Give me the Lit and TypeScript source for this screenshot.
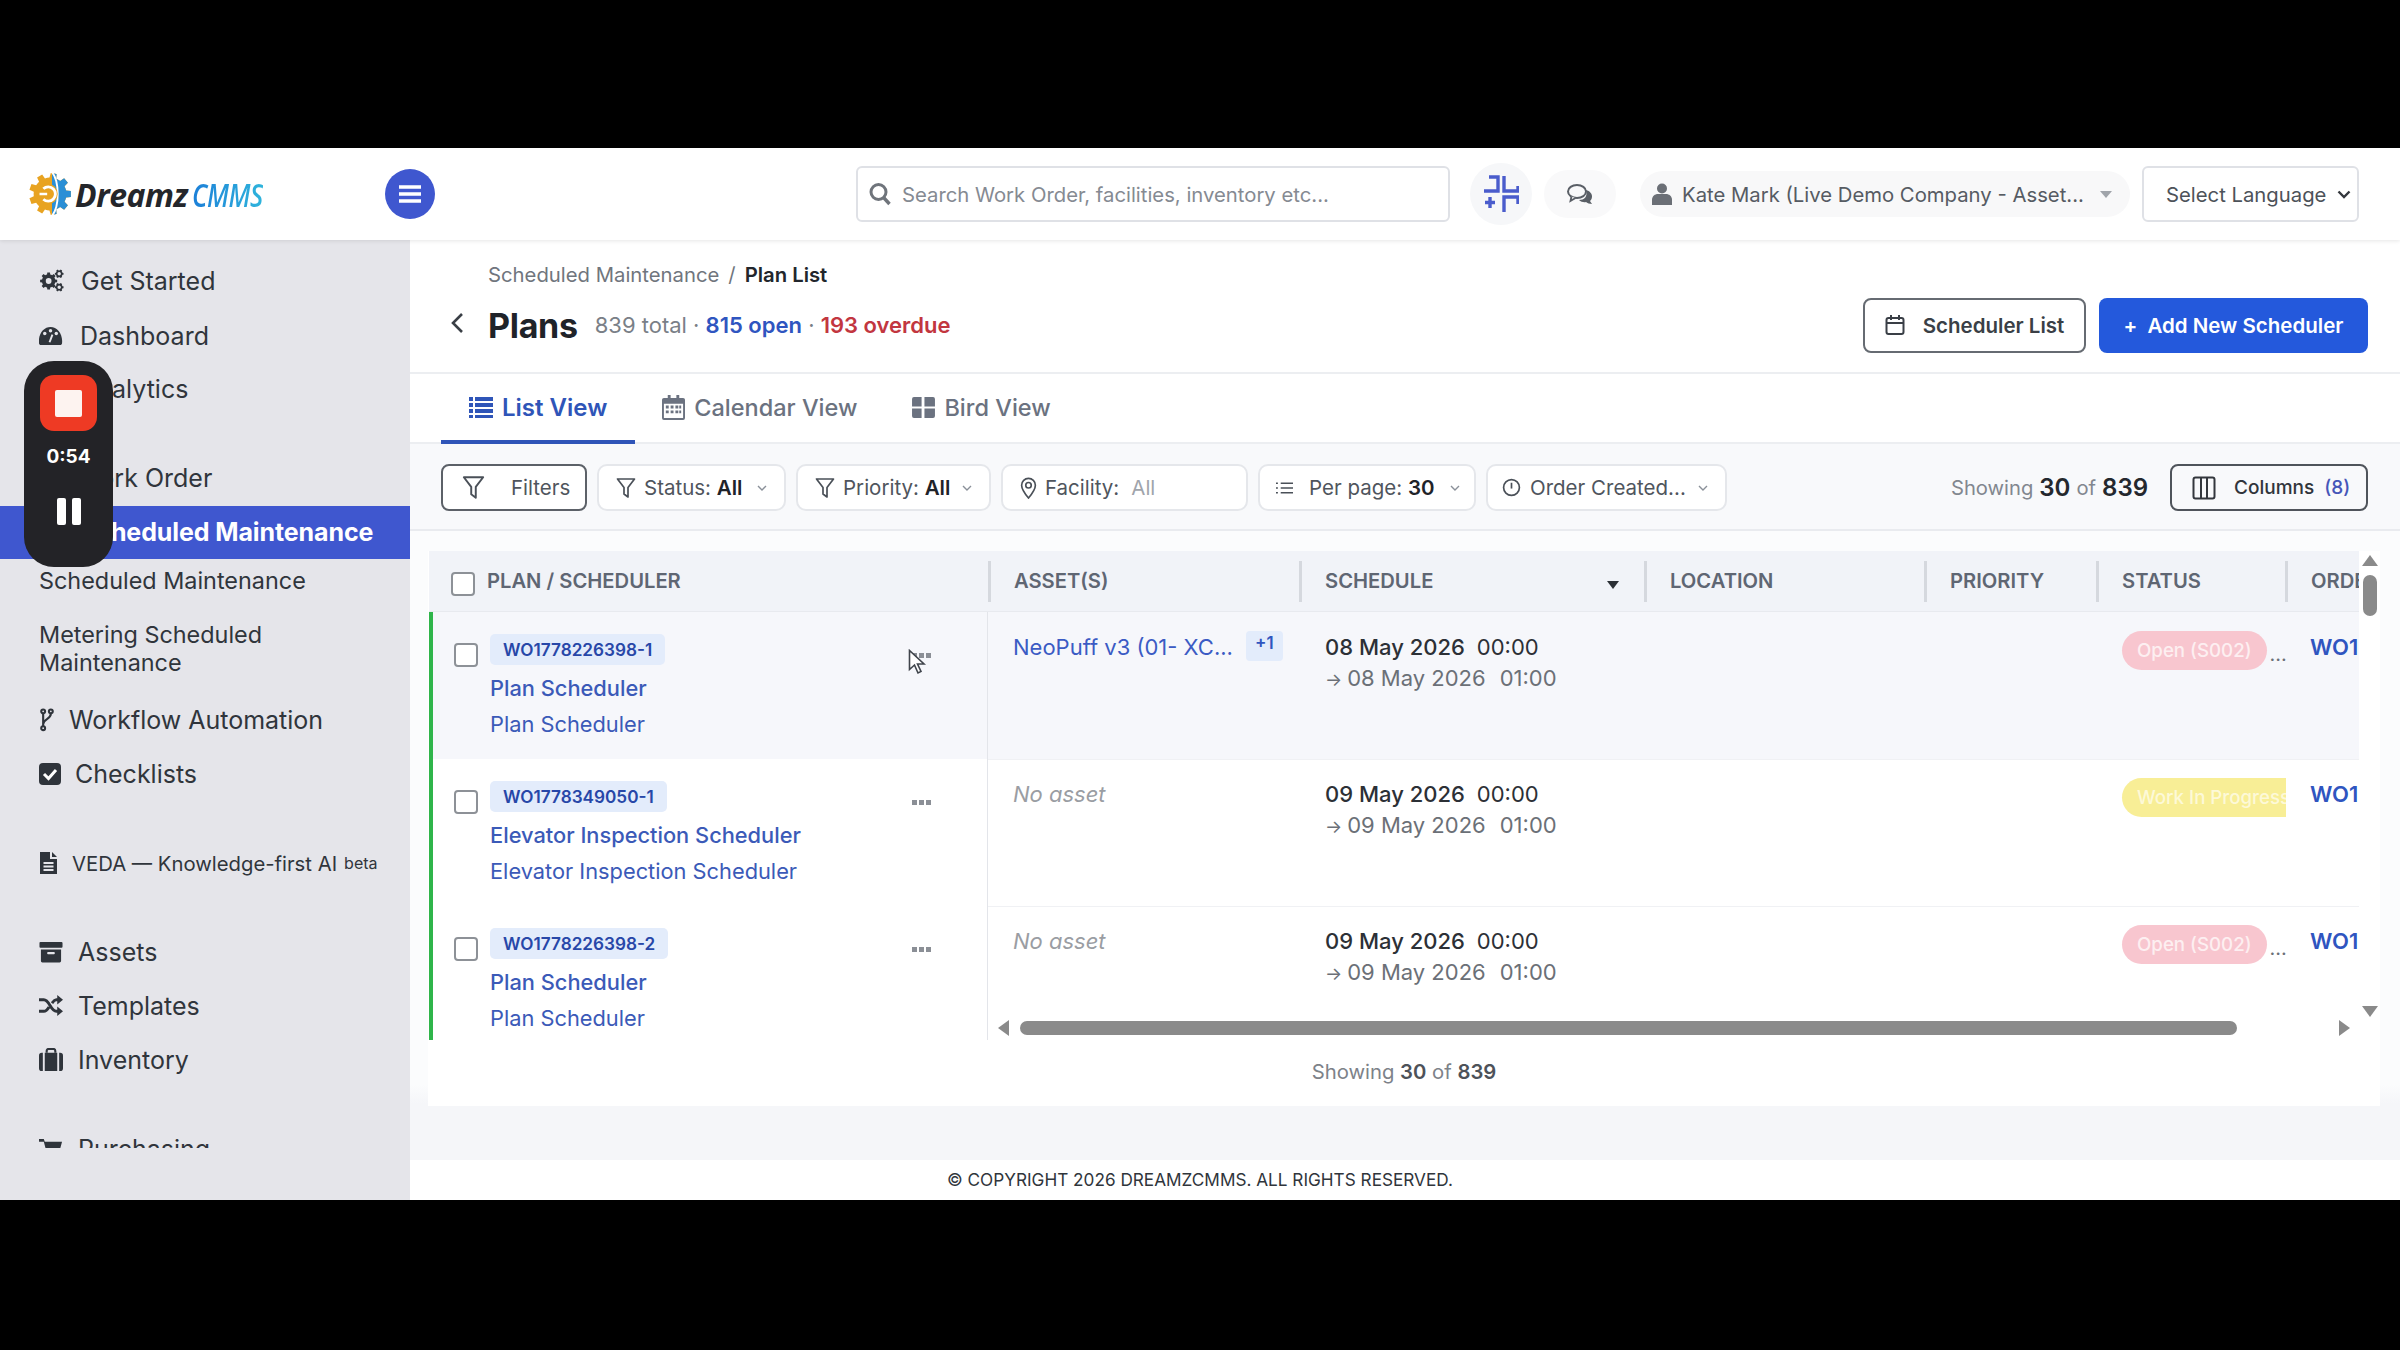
import { LitElement, html, css, svg } from 'lit';
import { customElement } from 'lit/decorators.js';

// builds a toothed wheel, used by the logo and the Get Started icon
function gearPath(cx: number, cy: number, r: number, teeth: number, hole: number) {
  const outer = r;
  const inner = r * 0.78;
  const step = (Math.PI * 2) / teeth;
  let d = '';
  for (let i = 0; i < teeth; i++) {
    const a = i * step;
    const pts = [
      [inner, a - step * 0.5],
      [inner, a - step * 0.3],
      [outer, a - step * 0.2],
      [outer, a + step * 0.2],
      [inner, a + step * 0.3],
    ];
    for (const [rad, ang] of pts) {
      d += `${d ? 'L' : 'M'}${(cx + rad * Math.cos(ang)).toFixed(2)} ${(cy + rad * Math.sin(ang)).toFixed(2)}`;
    }
  }
  d += 'Z';
  if (hole > 0) {
    d += `M${cx + hole} ${cy}a${hole} ${hole} 0 1 0 ${-hole * 2} 0a${hole} ${hole} 0 1 0 ${hole * 2} 0Z`;
  }
  return d;
}

const caret = html`<svg class="caret" viewBox="0 0 10 6" width="10" height="6"><path d="M1 1l4 4 4-4" fill="none" stroke="#8a9099" stroke-width="1.4"/></svg>`;
const funnel = html`<svg viewBox="0 0 20 22" width="20" height="22"><path d="M1.5 2h17l-6.5 8.5V20l-4-3v-6.5z" fill="none" stroke="#4a5058" stroke-width="1.7" stroke-linejoin="round"/></svg>`;

const icons = {
  cogs: { box: '0 0 26 25', body: svg`<path fill-rule="evenodd" d="${gearPath(9.5, 12.5, 9, 8, 3)}"/><path fill-rule="evenodd" d="${gearPath(20.5, 5, 4.6, 6, 1.8)}"/><path fill-rule="evenodd" d="${gearPath(20.5, 19, 4.6, 6, 1.8)}"/>` },
  gauge: { box: '0 0 25 25', body: svg`<path d="M0 20C-1 10 5 3 12 3s13 7 12 17c0 1-1 2-2 2H2c-1 0-2-1-2-2z"/><circle cx="6" cy="10" r="1.8" fill="#e5e5ea"/><circle cx="12" cy="7" r="1.8" fill="#e5e5ea"/><circle cx="18" cy="10" r="1.8" fill="#e5e5ea"/><path d="M11 19l3-8" stroke="#e5e5ea" stroke-width="2"/>` },
  branch: { box: '0 0 16 25', body: svg`<g fill="none" stroke="#2f343b" stroke-width="2.2"><circle cx="4" cy="3.5" r="2"/><circle cx="12" cy="3.5" r="2"/><circle cx="4" cy="21" r="2"/><path d="M4 6v13M12 6c0 6-8 5-8 11"/></g>` },
  check: { box: '0 0 22 24', body: svg`<rect x="0" y="1" width="22" height="22" rx="4"/><path d="M5 12l4.5 4.5L17 8" fill="none" stroke="#fff" stroke-width="3"/>` },
  file: { box: '0 0 19 24', body: svg`<path d="M1 1h10v7h7v15H1z"/><path d="M13 1l5 5h-5z"/><path d="M4.5 12h10M4.5 15.5h10M4.5 19h10" stroke="#e5e5ea" stroke-width="1.8"/>` },
  archive: { box: '0 0 24 25', body: svg`<rect x="0" y="2" width="24" height="6" rx="1"/><path d="M1.5 10h21v12a1.5 1.5 0 0 1-1.5 1.5H3A1.5 1.5 0 0 1 1.5 22z"/><rect x="8" y="12.5" width="8" height="2.4" rx="1" fill="#e5e5ea"/>` },
  random: { box: '0 0 25 25', body: svg`<g fill="none" stroke="#2f343b" stroke-width="3"><path d="M0 6h5c6 0 7 12 13 12h3M0 18h5c2.600 0 4-2 5.500-4.500M13.500 9.500C15 7.500 16 6 18 6h3"/></g><path d="M19 1l6 5-6 5zM19 13l6 5-6 5z"/>` },
  briefcase: { box: '0 0 25 25', body: svg`<path d="M8 5V3a2 2 0 0 1 2-2h5a2 2 0 0 1 2 2v2" fill="none" stroke="#2f343b" stroke-width="2.2"/><path d="M0 8a3 3 0 0 1 3-3h1v19H3a3 3 0 0 1-3-3zM6 5h13v19H6zM21 5h1a3 3 0 0 1 3 3v13a3 3 0 0 1-3 3h-1z"/>` },
  cart: { box: '0 0 25 25', body: svg`<path d="M0 2h5l1 3h18l-3 11H8L5 5H0z"/><circle cx="9" cy="21" r="2.500"/><circle cx="19" cy="21" r="2.500"/>` },
};

type NavItem = { label: string; icon?: keyof typeof icons; cls: string; extra?: string };

const nav: (NavItem | 'gap')[] = [
  { label: 'Get Started', icon: 'cogs', cls: 'i-cogs' },
  { label: 'Dashboard', icon: 'gauge', cls: 'i-dash' },
  { label: 'Analytics', icon: 'gauge', cls: 'i-std' },
  'gap',
  { label: 'Work Order', icon: 'file', cls: 'i-wo' },
  { label: 'Scheduled Maintenance', cls: 'active' },
  { label: 'Scheduled Maintenance', cls: 'sub' },
  { label: 'Metering Scheduled Maintenance', cls: 'sub two' },
  { label: 'Workflow Automation', icon: 'branch', cls: 'i-branch' },
  { label: 'Checklists', icon: 'check', cls: 'i-check' },
  'gap',
  { label: 'VEDA — Knowledge-first AI', icon: 'file', cls: 'i-file', extra: 'beta' },
  'gap',
  { label: 'Assets', icon: 'archive', cls: 'i-tight' },
  { label: 'Templates', icon: 'random', cls: 'i-tight' },
  { label: 'Inventory', icon: 'briefcase', cls: 'i-tight' },
  'gap',
  { label: 'Purchasing', icon: 'cart', cls: 'i-tight' },
];

type Row = {
  id: string;
  name: string;
  asset?: string;
  start: string;
  end: string;
  status: string;
  tone: string;
  alt?: boolean;
};

const rows: Row[] = [
  { id: 'WO1778226398-1', name: 'Plan Scheduler', asset: 'NeoPuff v3 (01- XC...', start: '08 May 2026', end: '08 May 2026', status: 'Open (S002)', tone: 'open', alt: true },
  { id: 'WO1778349050-1', name: 'Elevator Inspection Scheduler', start: '09 May 2026', end: '09 May 2026', status: 'Work In Progress', tone: 'wip' },
  { id: 'WO1778226398-2', name: 'Plan Scheduler', start: '09 May 2026', end: '09 May 2026', status: 'Open (S002)', tone: 'open' },
];

@customElement('app-root')
export class AppRoot extends LitElement {
  static styles = css`
    :host {
      display: block;
      width: 2400px;
      height: 1350px;
      background: #000;
      font-family: Inter, 'Noto Sans', sans-serif;
      color: #2f343b;
    }
    .frame {
      position: relative;
      padding-top: 148px;
      height: 1350px;
      box-sizing: border-box;
    }
    .app {
      position: relative;
      height: 1052px;
      display: flex;
      flex-direction: column;
      background: #fff;
      overflow: hidden;
    }
    /* top bar */
    .top {
      height: 92px;
      flex: none;
      display: flex;
      align-items: center;
      box-shadow: 0 1px 4px rgba(0, 0, 0, 0.1);
      position: relative;
      z-index: 2;
      background: #fff;
    }
    .logo {
      width: 385px;
      padding-left: 28px;
      box-sizing: border-box;
      display: flex;
      align-items: center;
      font-family: 'Open Sans', sans-serif;
      font-style: italic;
      font-weight: 700;
      font-size: 32px;
      letter-spacing: -0.5px;
      flex: none;
    }
    .logo svg { margin-right: 1px; flex: none; }
    .logo .d { color: #24262b; }
    .logo .c {
      margin-left: 5px;
      background: linear-gradient(90deg, #1c7fd8, #2fb4dc);
      -webkit-background-clip: text;
      background-clip: text;
      color: transparent;
      font-weight: 600;
      transform: scaleX(0.8);
      transform-origin: left center;
    }
    .burger {
      width: 50px;
      height: 50px;
      border-radius: 50%;
      background: #3f57cf;
      display: flex;
      align-items: center;
      justify-content: center;
      flex: none;
      margin-right: 421px;
    }
    .search {
      width: 594px;
      height: 56px;
      box-sizing: border-box;
      flex: none;
      border: 2px solid #dfe1e6;
      border-radius: 6px;
      display: flex;
      align-items: center;
      gap: 11px;
      padding-left: 11px;
      font-size: 20.300px;
      color: #858a92;
    }
    .tool {
      width: 62px;
      height: 62px;
      border-radius: 50%;
      background: #f6f7f9;
      display: flex;
      align-items: center;
      justify-content: center;
      flex: none;
      margin-left: 20px;
    }
    .tool.chat {
      width: 72px;
      height: 48px;
      border-radius: 24px;
      background: #f9f9fa;
      margin-left: 12px;
    }
    .user {
      width: 490px;
      height: 46px;
      flex: none;
      margin-left: 24px;
      border-radius: 23px;
      background: #f8f8f9;
      display: flex;
      align-items: center;
      box-sizing: border-box;
      padding-left: 12px;
      gap: 10px;
      font-size: 20.300px;
      color: #565b63;
      white-space: nowrap;
    }
    .user svg { flex: none; }
    .user .tri {
      margin-left: 6px;
      width: 0;
      height: 0;
      border: 6px solid transparent;
      border-top: 7px solid #a0a4aa;
      border-bottom: 0;
    }
    .lang {
      width: 217px;
      height: 56px;
      flex: none;
      margin-left: 12px;
      box-sizing: border-box;
      border: 2px solid #dfe1e6;
      border-radius: 6px;
      display: flex;
      align-items: center;
      justify-content: space-between;
      padding: 0 6px 0 22px;
      font-size: 20.300px;
      color: #4d5259;
      white-space: nowrap;
    }
    /* shell */
    .shell {
      flex: 1;
      display: flex;
      min-height: 0;
    }
    .side {
      width: 410px;
      flex: none;
      background: #e5e5ea;
    }
    .menu {
      height: 908px;
      overflow: hidden;
      padding-top: 14px;
      box-sizing: border-box;
    }
    .item {
      height: 54px;
      display: flex;
      align-items: center;
      padding-left: 39px;
      font-size: 25px;
      color: #30353c;
      white-space: nowrap;
      box-sizing: border-box;
    }
    .item svg { flex: none; fill: #2f343b; }
    .item .icon { width: 24px; height: 24px; margin-right: 17px; }
    .item.i-dash { padding-top: 2px; }
    .item.i-tight .icon { margin-right: 15px; }
    .item.i-wo .icon { margin-right: 13px; }
    .item.i-cogs .icon { width: 26px; margin-right: 16px; }
    .item.i-branch .icon { width: 16px; margin-right: 14px; }
    .item.i-check .icon { width: 22px; margin-right: 14px; }
    .item.i-file .icon { width: 19px; margin-right: 14px; }
    .item.i-file { font-size: 20.300px; }
    .item .beta { font-size: 16px; margin-left: 7px; }
    .item.active {
      height: 53px;
      padding-left: 80px;
      padding-bottom: 2px;
      margin: 1px 0 0;
      background: #3f57cf;
      color: #fff;
      font-weight: 700;
      letter-spacing: -0.1px;
    }
    .item.sub { height: 46px; padding-bottom: 3px; font-size: 23.400px; }
    .item.two {
      height: 88px;
      padding-bottom: 0;
      white-space: normal;
      line-height: 28px;
      padding-right: 100px;
    }
    .gap { height: 35px; }
    /* main column */
    .main {
      flex: 1;
      min-width: 0;
      display: flex;
      flex-direction: column;
    }
    .head {
      height: 134px;
      flex: none;
      box-sizing: border-box;
      border-bottom: 2px solid #eceef1;
      padding: 21px 32px 0 40px;
    }
    .crumb {
      padding-left: 38px;
      font-size: 20.300px;
      line-height: 28px;
      color: #70757d;
    }
    .crumb span { margin: 0 9px; }
    .crumb b { color: #22262c; font-weight: 600; }
    .titlebar {
      display: flex;
      align-items: center;
      height: 56px;
      margin-top: 8px;
    }
    .back { width: 38px; flex: none; }
    h1 {
      margin: 0;
      font-size: 34px;
      font-weight: 700;
      color: #1f2329;
      letter-spacing: -0.3px;
    }
    .stats {
      margin-left: 17px;
      font-size: 22px;
      color: #7a7f87;
    }
    .stats .o { color: #2f55c0; font-weight: 600; }
    .stats .r { color: #c2363f; font-weight: 600; }
    .btn {
      height: 55px;
      box-sizing: border-box;
      border-radius: 8px;
      display: flex;
      align-items: center;
      justify-content: center;
      font-size: 20.500px;
      font-weight: 600;
      flex: none;
    }
    .btn.ghost {
      margin-left: auto;
      width: 223px;
      border: 2px solid #666b72;
      gap: 18px;
      color: #3a3f46;
    }
    .btn.primary {
      margin-left: 13px;
      width: 269px;
      background: #2459dc;
      color: #fff;
      gap: 10px;
    }
    .tabs {
      height: 70px;
      flex: none;
      box-sizing: border-box;
      border-bottom: 2px solid #eceef1;
      padding-left: 31px;
      display: flex;
      gap: 27px;
    }
    .tab {
      height: 70px;
      box-sizing: border-box;
      display: flex;
      align-items: center;
      gap: 9px;
      font-size: 23.500px;
      font-weight: 500;
      color: #6b7280;
      padding: 0 28px 3px 0;
    }
    .tab.on {
      color: #2f55b8;
      font-size: 24px;
      font-weight: 600;
      border-bottom: 4px solid #2f55b8;
      padding: 0 28px;
    }
    .tab svg { fill: currentColor; flex: none; }
    .filters {
      height: 87px;
      flex: none;
      box-sizing: border-box;
      background: #f8f9fb;
      border-bottom: 2px solid #e9ebef;
      padding: 20px 32px 0 31px;
      display: flex;
      gap: 10px;
    }
    .chip {
      height: 47px;
      box-sizing: border-box;
      flex: none;
      background: #fff;
      border: 2px solid #e5e7eb;
      border-radius: 10px;
      display: flex;
      align-items: center;
      padding: 0 17px;
      gap: 8px;
      font-size: 20.500px;
      color: #4f555d;
      white-space: nowrap;
    }
    .chip svg { flex: none; }
    .chip b { color: #1f2329; font-weight: 600; }
    .chip .caret { margin-left: auto; }
    .chip.f-main {
      width: 146px;
      border-color: #5c6168;
      border-radius: 8px;
      gap: 26px;
      padding-left: 19px;
    }
    .chip.f-main svg { width: 23px; height: 25px; }
    .chip.f-status { width: 189px; }
    .chip.f-priority { width: 195px; }
    .chip.f-facility { width: 247px; }
    .chip.f-facility i { font-style: normal; color: #a0a4ab; margin-left: 12px; }
    .chip.f-page { width: 218px; padding-left: 16px; gap: 16px; }
    .chip.f-order { width: 241px; padding-left: 14px; gap: 9px; }
    .showing {
      margin-left: auto;
      height: 47px;
      display: flex;
      align-items: center;
      gap: 6px;
      font-size: 20.200px;
      color: #82878f;
    }
    .showing b { color: #24282e; font-size: 24px; font-weight: 600; }
    .cols {
      margin-left: 12px;
      width: 198px;
      height: 47px;
      box-sizing: border-box;
      flex: none;
      border: 2px solid #4f545b;
      border-radius: 8px;
      display: flex;
      align-items: center;
      padding-left: 20px;
      gap: 18px;
      font-size: 19px;
      font-weight: 500;
      color: #30353b;
      white-space: nowrap;
    }
    .cols svg { flex: none; }
    .cols em { font-style: normal; color: #4656b8; margin-left: 5px; }
    /* table area */
    .content {
      flex: 1;
      min-height: 0;
      background: linear-gradient(#fbfcfd 0 88%, #f5f6f9 91%);
      padding: 20px 20px 0 18px;
    }
    .card {
      position: relative;
      height: 555px;
      background: #fff;
    }
    .table {
      width: 1930px;
      margin-left: 1px;
      height: 489px;
      overflow: hidden;
    }
    .grid {
      display: grid;
      grid-template-columns: 559px 311px 345px 280px 172px 189px 74px;
    }
    .thead {
      height: 61px;
      background: #f1f3f8;
      border-bottom: 1px solid #e8eaef;
      box-sizing: border-box;
    }
    .th {
      display: flex;
      align-items: center;
      padding: 0 0 2px 26px;
      height: 60px;
      box-sizing: border-box;
      position: relative;
      font-size: 20.200px;
      font-weight: 600;
      color: #5f6673;
      white-space: nowrap;
      overflow: hidden;
    }
    .th::before {
      content: '';
      position: absolute;
      left: 0;
      top: 10px;
      height: 41px;
      width: 3px;
      background: #d5d8de;
    }
    .th.first { padding-left: 22px; gap: 12px; }
    .th.first .box { margin-top: 7px; }
    .th.first::before { display: none; }
    .th .sort {
      position: absolute;
      right: 25px;
      top: 30px;
      width: 0;
      height: 0;
      border: 6px solid transparent;
      border-top: 8px solid #2b2f35;
      border-bottom: 0;
    }
    .box {
      width: 24px;
      height: 24px;
      box-sizing: border-box;
      flex: none;
      border: 2px solid #8d9197;
      border-radius: 4px;
      background: #fff;
    }
    .tbody { position: relative; }
    .row { height: 147px; box-sizing: border-box; background: #fff; }
    .row.alt { background: #f6f7fb; }
    .row + .row .cell { box-shadow: inset 0 1px 0 #f0f1f4; }
    .plan {
      border-left: 4px solid #2fb54a;
      border-right: 1px solid #e3e5ea;
      display: flex;
      padding: 22px 56px 0 21px;
      box-sizing: border-box;
      height: 100%;
    }
    .plan .box { margin-top: 9px; margin-right: 12px; }
    .wo {
      display: inline-block;
      height: 31px;
      line-height: 31px;
      padding: 0 13px;
      border-radius: 5px;
      background: #e3ecfb;
      color: #2747a8;
      font-size: 17.200px;
      font-weight: 600;
    }
    .plan a {
      display: block;
      line-height: 36px;
      color: #3b5ab8;
      font-size: 21.800px;
      white-space: nowrap;
    }
    .plan a.lead { margin-top: 5px; font-weight: 500; }
    .dots {
      margin-left: auto;
      display: flex;
      gap: 2px;
      margin-top: 19px;
      height: 4px;
    }
    .dots i { width: 5px; height: 5px; background: #8b8f96; }
    .cell {
      padding-top: 20px;
      box-sizing: border-box;
      font-size: 22px;
      line-height: 31px;
      white-space: nowrap;
      overflow: hidden;
    }
    .asset { padding-left: 25px; display: flex; align-items: flex-start; }
    .asset a { color: #3b5bc4; }
    .asset .more {
      margin-left: 13px;
      margin-top: -1px;
      width: 37px;
      height: 30px;
      line-height: 24px;
      background: #e3ecfb;
      border-radius: 4px;
      text-align: center;
      font-size: 17px;
      font-weight: 600;
      color: #2f55c0;
    }
    .asset em { color: #9a9da3; }
    .sched { padding-left: 26px; }
    .sched .s { color: #2c3036; font-weight: 500; }
    .sched .s span { font-weight: 400; margin-left: 12px; }
    .sched .e { color: #6b7077; }
    .sched .e .arrow { font-size: 18px; margin: 0 5px 0 0; }
    .sched .e .at { margin-left: 14px; }
    .status { padding-left: 26px; display: flex; align-items: flex-start; overflow: visible; }
    .pill {
      height: 39px;
      line-height: 39px;
      margin-top: -1px;
      padding: 0 15px;
      border-radius: 20px;
      font-size: 18.700px;
      font-weight: 500;
      flex: none;
      box-sizing: border-box;
    }
    .pill.open { background: #f8c6cf; color: #fdeff1; }
    .pill.wip {
      width: 164px;
      overflow: hidden;
      background: #f8ee96;
      color: #fdf9d8;
      border-radius: 20px 0 0 20px;
    }
    .status .more { margin-left: 3px; color: #6b7077; font-size: 20px; line-height: 44px; }
    .order { padding-left: 25px; color: #2f55c0; font-weight: 600; }
    /* drawn scrollbars, they sit over the table */
    .vbar {
      position: absolute;
      left: 1934px;
      top: 4px;
      width: 16px;
      height: 462px;
      display: flex;
      flex-direction: column;
      align-items: center;
    }
    .vbar .up, .vbar .down, .hbar .l, .hbar .r { width: 0; height: 0; border: 8px solid transparent; }
    .vbar .up { border-bottom: 11px solid #8a8a8a; border-top: 0; }
    .vbar .thumb { width: 14px; height: 41px; border-radius: 7px; background: #8a8a8a; margin-top: 9px; }
    .vbar .down { margin-top: auto; border-top: 11px solid #8a8a8a; border-bottom: 0; }
    .hbar {
      position: absolute;
      left: 570px;
      top: 470px;
      width: 1360px;
      height: 14px;
      background: #fff;
      display: flex;
      align-items: center;
    }
    .hbar .l { border-right: 11px solid #8a8a8a; border-left: 0; }
    .hbar .thumb { width: 1217px; height: 14px; border-radius: 7px; background: #8a8a8a; margin-left: 11px; }
    .hbar .r { margin-left: auto; margin-right: 8px; border-left: 11px solid #8a8a8a; border-right: 0; }
    .cardfoot {
      height: 62px;
      display: flex;
      align-items: center;
      justify-content: center;
      font-size: 20.300px;
      color: #7d8289;
      white-space: pre;
    }
    .cardfoot b { color: #4d5259; font-weight: 600; }
    .foot {
      height: 40px;
      flex: none;
      background: #fff;
      font-size: 17.200px;
      line-height: 40px;
      color: #30353b;
      padding-left: 537px;
    }
    /* screen recorder widget floating over the page */
    .rec {
      position: absolute;
      left: 24px;
      top: 213px;
      width: 89px;
      height: 206px;
      border-radius: 30px;
      background: #232327;
      z-index: 5;
      display: flex;
      flex-direction: column;
      align-items: center;
      padding-top: 14px;
      box-sizing: border-box;
    }
    .rec .stop {
      width: 57px;
      height: 56px;
      border-radius: 14px;
      background: #ee3a24;
      display: flex;
      align-items: center;
      justify-content: center;
    }
    .rec .stop i { width: 27px; height: 27px; background: #fdf3f0; border-radius: 2px; }
    .rec .time { margin-top: 14px; color: #fff; font-weight: 700; font-size: 19px; line-height: 24px; }
    .rec .pause { display: flex; gap: 6px; margin-top: 29px; }
    .rec .pause i { width: 9px; height: 27px; border-radius: 2px; background: #fff; }
    .cursor { position: absolute; left: 908px; top: 501px; z-index: 6; }
  `;

  renderMenu() {
    return nav.map((n) => {
      if (n === 'gap') return html`<div class="gap"></div>`;
      return html`<div class="item ${n.cls}">
        ${n.icon ? html`<svg class="icon" viewBox="${icons[n.icon].box}">${icons[n.icon].body}</svg>` : ''}
        <span>${n.label}</span>${n.extra ? html`<span class="beta">${n.extra}</span>` : ''}
      </div>`;
    });
  }

  renderRow(r: Row) {
    return html`<div class="grid row ${r.alt ? 'alt' : ''}">
      <div class="plan">
        <div class="box"></div>
        <div>
          <span class="wo">${r.id}</span>
          <a class="lead">${r.name}</a>
          <a>${r.name}</a>
        </div>
        <div class="dots"><i></i><i></i><i></i></div>
      </div>
      <div class="cell asset">
        ${r.asset ? html`<a>${r.asset}</a><span class="more">+1</span>` : html`<em>No asset</em>`}
      </div>
      <div class="cell sched">
        <div class="s">${r.start}<span>00:00</span></div>
        <div class="e"><span class="arrow">→</span>${r.end}<span class="at">01:00</span></div>
      </div>
      <div class="cell"></div>
      <div class="cell"></div>
      <div class="cell status">
        <span class="pill ${r.tone}">${r.status}</span>
        ${r.tone === 'open' ? html`<span class="more">...</span>` : ''}
      </div>
      <div class="cell order">WO1</div>
    </div>`;
  }

  render() {
    return html`<div class="frame">
      <div class="app">
        <div class="top">
          <div class="logo">
            <svg viewBox="0 0 46 46" width="46" height="44">
              <defs>
                <clipPath id="gear-right"><rect x="24" y="0" width="22" height="46"/></clipPath>
              </defs>
              <path fill="#e8a321" d="${gearPath(22, 23, 22, 9, 0)}"/>
              <path fill="#2a8fd6" clip-path="url(#gear-right)" d="${gearPath(22, 23, 22, 9, 0)}"/>
              <path d="M24 0c8 10 8 36 0 46" fill="none" stroke="#fff" stroke-width="2"/>
              <circle cx="19" cy="23" r="11" fill="#e8a321"/>
              <path d="M15 17.500a7.500 7.500 0 1 1 0 11" fill="none" stroke="#fff" stroke-width="3"/>
              <path d="M11 23h8" stroke="#fff" stroke-width="2.600"/>
            </svg>
            <span class="d">Dreamz</span><span class="c">CMMS</span>
          </div>
          <div class="burger">
            <svg viewBox="0 0 22 18" width="22" height="18"><path d="M0 2h22M0 9h22M0 16h22" stroke="#fff" stroke-width="3.400"/></svg>
          </div>
          <div class="search">
            <svg viewBox="0 0 22 24" width="22" height="24"><circle cx="9.500" cy="10" r="7.500" fill="none" stroke="#6f747b" stroke-width="3"/><path d="M15 16l5.500 6" stroke="#6f747b" stroke-width="3.400"/></svg>
            <span>Search Work Order, facilities, inventory etc...</span>
          </div>
          <div class="tool">
            <svg viewBox="0 0 36 38" width="36" height="38"><g fill="none" stroke="#4a5ccc" stroke-width="3.400"><path d="M6 2h9v14H1M21 1v15h14v-5M7 22v11M2 27.500h10M21 37V22h14v7"/></g></svg>
          </div>
          <div class="tool chat">
            <svg viewBox="0 0 26 20" width="26" height="20"><path d="M19 6c4 1 6 4 6 6.500 0 2-1 3.500-2 4.500l2 3c-2 0-5-1-6-2-2 .5-5 0-7-2 5 0 9-3 7-10z" fill="#5a5f66"/><ellipse cx="10" cy="7.500" rx="9" ry="6.500" fill="#f9f9fa" stroke="#5a5f66" stroke-width="2"/><path d="M4.500 12.500L3.500 17l5-3" fill="#f9f9fa" stroke="#5a5f66" stroke-width="1.800"/></svg>
          </div>
          <div class="user">
            <svg viewBox="0 0 20 22" width="20" height="22"><circle cx="10" cy="5.500" r="5" fill="#6b6f76"/><path d="M0 22v-5c0-4 3-6 6-6h8c3 0 6 2 6 6v5z" fill="#6b6f76"/></svg>
            <span>Kate Mark (Live Demo Company - Asset...</span>
            <span class="tri"></span>
          </div>
          <div class="lang">
            <span>Select Language</span>
            <svg viewBox="0 0 14 9" width="14" height="9"><path d="M1.500 1.500L7 7l5.500-5.500" fill="none" stroke="#33373d" stroke-width="2.400"/></svg>
          </div>
        </div>
        <div class="shell">
          <aside class="side">
            <div class="menu">${this.renderMenu()}</div>
          </aside>
          <div class="main">
            <div class="head">
              <div class="crumb">Scheduled Maintenance<span>/</span><b>Plan List</b></div>
              <div class="titlebar">
                <div class="back">
                  <svg viewBox="0 0 14 22" width="14" height="22"><path d="M12 2L3 11l9 9" fill="none" stroke="#3a3f46" stroke-width="2.600"/></svg>
                </div>
                <h1>Plans</h1>
                <div class="stats">839 total · <span class="o">815 open</span> · <span class="r">193 overdue</span></div>
                <div class="btn ghost">
                  <svg viewBox="0 0 20 22" width="20" height="22"><g fill="none" stroke="#3a3f46" stroke-width="2"><rect x="1.500" y="4" width="17" height="16" rx="2"/><path d="M1.500 9h17M6 1v5M14 1v5"/></g></svg>
                  <span>Scheduler List</span>
                </div>
                <div class="btn primary"><span>+</span><span>Add New Scheduler</span></div>
              </div>
            </div>
            <div class="tabs">
              <div class="tab on">
                <svg viewBox="0 0 24 22" width="24" height="22"><path d="M0 1h4v4H0zM6 1h18v4H6zM0 7h4v4H0zM6 7h18v4H6zM0 13h4v4H0zM6 13h18v4H6zM0 19h4v3H0zM6 19h18v3H6z"/></svg>
                <span>List View</span>
              </div>
              <div class="tab">
                <svg viewBox="0 0 24 26" width="23" height="25"><path fill-rule="evenodd" d="M6 0h3v3h6V0h3v3h4a2 2 0 0 1 2 2v19a2 2 0 0 1-2 2H2a2 2 0 0 1-2-2V5a2 2 0 0 1 2-2h4zM2 9v15h20V9zM4 11h3v3H4zM9 11h3v3H9zM14 11h3v3h-3zM18 11h2v3h-2zM4 16h3v3H4zM9 16h3v3H9zM14 16h3v3h-3zM18 16h2v3h-2z"/></svg>
                <span>Calendar View</span>
              </div>
              <div class="tab">
                <svg viewBox="0 0 24 22" width="23" height="21"><path d="M0 2a2 2 0 0 1 2-2h8v10H0zM13 0h9a2 2 0 0 1 2 2v8H13zM0 12h10v10H2a2 2 0 0 1-2-2zM13 12h11v8a2 2 0 0 1-2 2h-9z"/></svg>
                <span>Bird View</span>
              </div>
            </div>
            <div class="filters">
              <div class="chip f-main">${funnel}<span>Filters</span></div>
              <div class="chip f-status">${funnel}<span>Status: <b>All</b></span>${caret}</div>
              <div class="chip f-priority">${funnel}<span>Priority: <b>All</b></span>${caret}</div>
              <div class="chip f-facility">
                <svg viewBox="0 0 18 24" width="17" height="22"><g fill="none" stroke="#4a5058" stroke-width="1.800"><path d="M9 23C4 17 1.500 13 1.500 9a7.500 7.500 0 0 1 15 0c0 4-2.500 8-7.500 14z"/><circle cx="9" cy="9" r="3"/></g></svg>
                <span>Facility:<i>All</i></span>
              </div>
              <div class="chip f-page">
                <svg viewBox="0 0 18 14" width="17" height="14"><path d="M0 2h2M5 2h13M0 7h2M5 7h13M0 12h2M5 12h13" stroke="#4a5058" stroke-width="1.500"/></svg>
                <span>Per page: <b>30</b></span>${caret}
              </div>
              <div class="chip f-order">
                <svg viewBox="0 0 18 18" width="19" height="19"><g fill="none" stroke="#4a5058" stroke-width="1.600"><circle cx="9" cy="9" r="7.500"/><path d="M9 4.500V10"/></g></svg>
                <span>Order Created...</span>${caret}
              </div>
              <div class="showing"><span>Showing</span><b>30</b><span>of</span><b>839</b></div>
              <div class="cols">
                <svg viewBox="0 0 24 24" width="24" height="24"><g fill="none" stroke="#33373d" stroke-width="2"><rect x="1.500" y="1.500" width="21" height="21" rx="2"/><path d="M9 1.500v21M15 1.500v21"/></g></svg>
                <span>Columns<em> (8)</em></span>
              </div>
            </div>
            <div class="content">
              <div class="card">
                <div class="table">
                  <div class="grid thead">
                    <div class="th first"><div class="box"></div><span>PLAN / SCHEDULER</span></div>
                    <div class="th">ASSET(S)</div>
                    <div class="th">SCHEDULE<span class="sort"></span></div>
                    <div class="th">LOCATION</div>
                    <div class="th">PRIORITY</div>
                    <div class="th">STATUS</div>
                    <div class="th">ORDER</div>
                  </div>
                  <div class="tbody">${rows.map((r) => this.renderRow(r))}</div>
                </div>
                <div class="vbar"><span class="up"></span><span class="thumb"></span><span class="down"></span></div>
                <div class="hbar"><span class="l"></span><span class="thumb"></span><span class="r"></span></div>
                <div class="cardfoot">Showing <b>30</b> of <b>839</b></div>
              </div>
            </div>
            <div class="foot">© COPYRIGHT 2026 DREAMZCMMS. ALL RIGHTS RESERVED.</div>
          </div>
        </div>
        <div class="rec">
          <div class="stop"><i></i></div>
          <div class="time">0:54</div>
          <div class="pause"><i></i><i></i></div>
        </div>
        <svg class="cursor" viewBox="0 0 20 26" width="20" height="26"><path d="M1.500 1.500v19l5-4.500 3.500 8 3-1.500-3.500-7.500H16z" fill="#fff" stroke="#40454c" stroke-width="1.600"/></svg>
      </div>
    </div>`;
  }
}
